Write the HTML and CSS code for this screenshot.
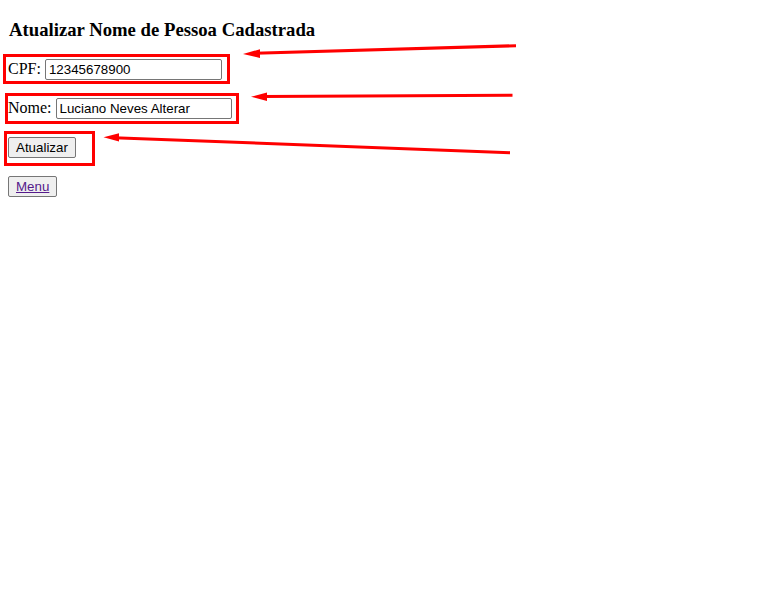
FILE: index.html
```html
<!DOCTYPE html>
<html lang="pt-BR">
<head>
<meta charset="utf-8">
<title>Atualizar Nome de Pessoa Cadastrada</title>
<link rel="stylesheet" href="styles.css">
</head>
<body>
<h3 class="title">Atualizar Nome de Pessoa Cadastrada</h3>
<form class="form">
  <p class="row">CPF: <input class="field" type="text" value="12345678900"></p>
  <p class="row">Nome: <input class="field field-name" type="text" value="Luciano Neves Alterar"></p>
  <p class="row"><button class="btn" type="button">Atualizar</button></p>
</form>
<p class="row"><button class="btn" type="button"><a class="link" href="#">Menu</a></button></p>

<svg class="annot" width="766" height="592" viewBox="0 0 766 592" xmlns="http://www.w3.org/2000/svg">
  <g fill="none" stroke="#ff0000" stroke-width="3">
    <rect x="4.5" y="55.5" width="224" height="27"/>
    <rect x="6.5" y="94.5" width="231" height="28"/>
    <rect x="5.5" y="132.5" width="88" height="32"/>
    <line x1="516" y1="45.7" x2="255" y2="53.3"/>
    <line x1="512.5" y1="95.2" x2="262" y2="96.6"/>
    <line x1="510" y1="152.7" x2="114" y2="137.7"/>
  </g>
  <g fill="#ff0000">
    <polygon points="243,54 260,49.2 260,58"/>
    <polygon points="251,96.8 267,92.6 267,101"/>
    <polygon points="103.5,137.3 119,133.2 119,141.6"/>
  </g>
</svg>
</body>
</html>
```

FILE: styles.css
```css
html, body {
  background: #ffffff;
}

body {
  margin: 0;
  padding: 8px;
  font-family: "Liberation Serif", "Times New Roman", serif;
  font-size: 16px;
  color: #000000;
  position: relative;
}

.title {
  font-family: "Liberation Serif", "Times New Roman", serif;
  font-size: 18.72px;
  font-weight: bold;
  margin: 10.72px 0 18.72px;
  padding-left: 1px;
}

.form {
  margin: 0;
}

.row {
  margin: 16px 0;
  height: 23px;
}

.field {
  font-family: "Liberation Sans", Arial, sans-serif;
  font-size: 13.333px;
  color: #000000;
  border: 1px solid #767676;
  border-radius: 2px;
  padding: 1px 2px 1px 3px;
  width: 170px;
  height: 17px;
  margin: 0;
  box-sizing: content-box;
  background: #ffffff;
}

.field-name {
  width: 169px;
}

.btn {
  font-family: "Liberation Sans", Arial, sans-serif;
  font-size: 13.333px;
  color: #000000;
  background: #efefef;
  border: 1px solid #767676;
  border-radius: 2px;
  padding: 2px 7px;
  margin: 0;
  line-height: 15px;
}

.link {
  color: #551a8b;
  text-decoration: underline;
}

.annot {
  position: absolute;
  top: 0;
  left: 0;
  pointer-events: none;
}
```
